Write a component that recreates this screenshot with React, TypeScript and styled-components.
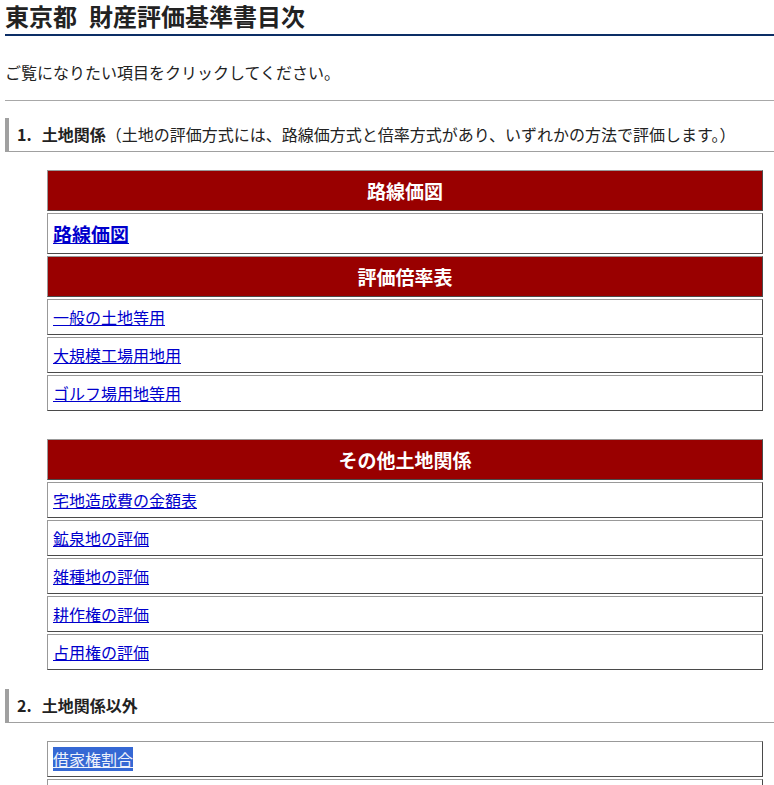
import styled, { createGlobalStyle } from 'styled-components'

const GlobalStyle = createGlobalStyle`
  body {
    margin: 0;
    background: #fff;
    color: #222;
    font-family: "Noto Sans CJK JP", "Noto Sans", sans-serif;
  }
`

const Page = styled.div`
  padding-left: 5px;
  overflow: hidden;
`

const Title = styled.h1`
  margin: 0;
  font-size: 24px;
  font-weight: bold;
  line-height: 32px;
  padding-bottom: 2px;
  border-bottom: 2px solid #0c2e66;
  color: #222;
`

const Intro = styled.p`
  margin: 24px 0 0;
  font-size: 16px;
  line-height: 24px;
`

const Rule = styled.hr`
  margin: 16px 0 0;
  border: 0;
  border-top: 1px solid #a8a8a8;
  height: 0;
`

const SectionHead = styled.h2<{ $top: number }>`
  margin: ${p => p.$top}px 0 0;
  height: 33px;
  line-height: 33px;
  padding-left: 8px;
  border-left: 4px solid #a0a0a0;
  border-bottom: 1px solid #a0a0a0;
  font-size: 16px;
  font-weight: normal;
  white-space: nowrap;
`

const Num = styled.span`
  font-weight: bold;
  margin-right: 10px;
`

const Strong = styled.span`
  font-weight: bold;
`

const Table = styled.div<{ $top: number }>`
  margin: ${p => p.$top}px 11px 0 42px;
  display: flex;
  flex-direction: column;
  gap: 2px;
`

const Cell = styled.div<{ $big?: boolean }>`
  box-sizing: border-box;
  height: ${p => (p.$big ? 41 : 36)}px;
  display: flex;
  align-items: center;
  padding-left: 5px;
  border: 1px solid #4a4a4a;
  border-top-color: #999;
  border-left-color: #999;
  background: #fff;
`

const HeadCell = styled(Cell)`
  justify-content: center;
  padding-left: 0;
  background: #990000;
  color: #fff;
  font-size: 19px;
  font-weight: bold;
`

const Link = styled.a<{ $big?: boolean; $selected?: boolean }>`
  color: ${p => (p.$selected ? '#eef2fb' : '#0000cc')};
  background: ${p => (p.$selected ? '#3568d4' : 'transparent')};
  font-size: ${p => (p.$big ? 19 : 16)}px;
  font-weight: ${p => (p.$big ? 'bold' : 'normal')};
  line-height: 24px;
  text-decoration: underline;
  cursor: pointer;
`

const rosen = ['一般の土地等用', '大規模工場用地用', 'ゴルフ場用地等用']
const others = ['宅地造成費の金額表', '鉱泉地の評価', '雑種地の評価', '耕作権の評価', '占用権の評価']

export default function App() {
  return (
    <>
      <GlobalStyle />
      <Page>
        <Title>東京都&ensp;財産評価基準書目次</Title>
        <Intro>ご覧になりたい項目をクリックしてください。</Intro>
        <Rule />

        <SectionHead $top={17}>
          <Num>1.</Num>
          <Strong>土地関係</Strong>
          （土地の評価方式には、路線価方式と倍率方式があり、いずれかの方法で評価します。）
        </SectionHead>

        <Table $top={18}>
          <HeadCell $big>路線価図</HeadCell>
          <Cell $big>
            <Link $big>路線価図</Link>
          </Cell>
          <HeadCell $big>評価倍率表</HeadCell>
          {rosen.map(t => (
            <Cell key={t}>
              <Link>{t}</Link>
            </Cell>
          ))}
        </Table>

        <Table $top={28}>
          <HeadCell $big>その他土地関係</HeadCell>
          {others.map(t => (
            <Cell key={t}>
              <Link>{t}</Link>
            </Cell>
          ))}
        </Table>

        <SectionHead $top={19}>
          <Num>2.</Num>
          <Strong>土地関係以外</Strong>
        </SectionHead>

        <Table $top={18}>
          <Cell>
            <Link $selected>借家権割合</Link>
          </Cell>
          <Cell>
            <Link>構築物の評価</Link>
          </Cell>
        </Table>
      </Page>
    </>
  )
}
